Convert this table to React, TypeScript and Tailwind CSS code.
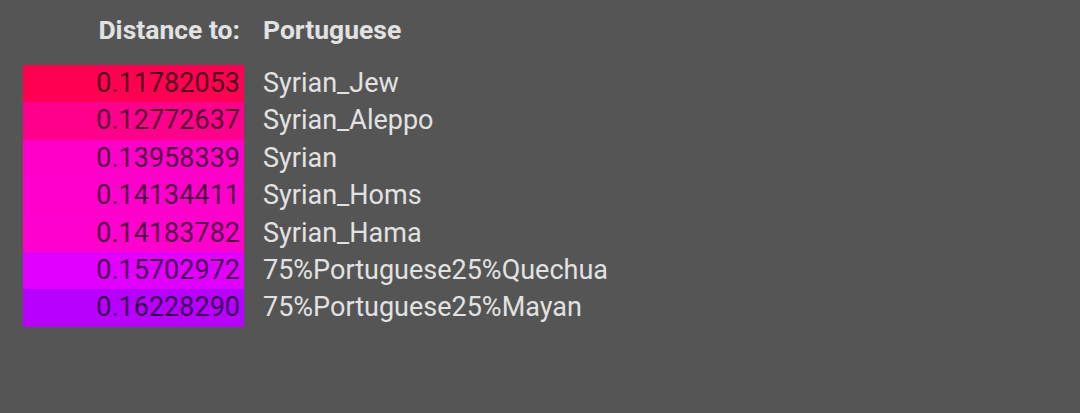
const rows = [
  { d: '0.11782053', name: 'Syrian_Jew', bg: 'bg-[#ff0052]' },
  { d: '0.12772637', name: 'Syrian_Aleppo', bg: 'bg-[#ff008c]' },
  { d: '0.13958339', name: 'Syrian', bg: 'bg-[#ff00c8]' },
  { d: '0.14134411', name: 'Syrian_Homs', bg: 'bg-[#ff00cc]' },
  { d: '0.14183782', name: 'Syrian_Hama', bg: 'bg-[#ff00cd]' },
  { d: '0.15702972', name: '75%Portuguese25%Quechua', bg: 'bg-[#e100ff]' },
  { d: '0.16228290', name: '75%Portuguese25%Mayan', bg: 'bg-[#b700ff]' },
]

export default function App() {
  return (
    <div className="w-[1080px] h-[413px] bg-[#555555] font-['Roboto',sans-serif] text-[#e2e2e2] pl-[23px] pt-[14px]">
      <div className="grid grid-cols-[221px_auto] gap-x-[19px]">
        {/* header */}
        <div className="text-right pr-[4px] text-[26.5px] font-bold leading-[32px] h-[51px]">Distance to:</div>
        <div className="text-[26.5px] font-bold leading-[32px]">Portuguese</div>

        {rows.map((r) => (
          <div key={r.d} className="contents">
            <div className={`${r.bg} h-[37.4px] text-right pr-[4px] text-[27px] leading-[37px] text-black/70`}>
              {r.d}
            </div>
            <div className="text-[27px] leading-[37px]">{r.name}</div>
          </div>
        ))}
      </div>
    </div>
  )
}
